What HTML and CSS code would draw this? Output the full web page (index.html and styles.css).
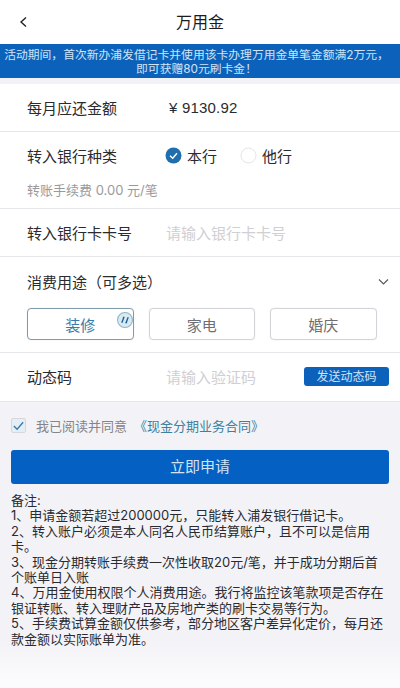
FILE: index.html
```html
<!DOCTYPE html>
<html lang="zh-CN">
<head>
    <meta charset="UTF-8">
    <meta name="viewport" content="width=device-width, initial-scale=1.0">
    <title>万用金</title>
    <link rel="stylesheet" href="styles.css">
</head>
<body>
    <header class="nav">
        <svg class="nav-back" width="10" height="14" viewBox="0 0 10 14"><path d="M8 2.5 L3 7 L8 11.5" fill="none" stroke="#222" stroke-width="1.4"/></svg>
        <h1>万用金</h1>
    </header>
    <div class="banner">活动期间，首次新办浦发借记卡并使用该卡办理万用金单笔金额满2万元，<br>即可获赠80元刷卡金！</div>

    <section class="row row-first">
        <span class="label">每月应还金额</span>
        <span class="amount">¥ 9130.92</span>
    </section>

    <section class="row-block row-bank">
        <div class="line">
            <span class="label">转入银行种类</span>
            <div class="radios">
                <span class="radio">
                    <svg width="17" height="17" viewBox="0 0 17 17"><circle cx="8.5" cy="8.5" r="8" fill="#1f6fae"/><path d="M5 8.8 L7.7 11.2 L12 6.2" fill="none" stroke="#fff" stroke-width="1.4"/></svg>
                    本行
                </span>
                <span class="radio">
                    <svg width="17" height="17" viewBox="0 0 17 17"><circle cx="8.5" cy="8.5" r="7.5" fill="#fff" stroke="#e4e4e6"/></svg>
                    他行
                </span>
            </div>
        </div>
        <p class="fee">转账手续费 0.00 元/笔</p>
    </section>

    <section class="row">
        <span class="label">转入银行卡卡号</span>
        <span class="placeholder">请输入银行卡卡号</span>
    </section>

    <section class="row-block row-purpose">
        <div class="line line-between">
            <span class="label">消费用途（可多选）</span>
            <svg width="11" height="8" viewBox="0 0 11 8"><path d="M1 1.5 L5.5 6 L10 1.5" fill="none" stroke="#556" stroke-width="1.1"/></svg>
        </div>
        <div class="tags">
            <div class="tag tag-on">装修
                <svg class="tag-mark" width="16" height="16" viewBox="0 0 15 15"><circle cx="7.5" cy="7.5" r="7" fill="#d8eaf2" stroke="#8fb4c6"/><path d="M4.5 10 L6.5 5 M5.5 5 H7 M8.5 10 L10.5 5 M7.8 10 H9.5" fill="none" stroke="#1f6296" stroke-width="1.3"/></svg>
            </div>
            <div class="tag">家电</div>
            <div class="tag">婚庆</div>
        </div>
    </section>

    <section class="row row-code">
        <span class="label">动态码</span>
        <span class="placeholder placeholder-code">请输入验证码</span>
        <span class="send">发送动态码</span>
    </section>

    <div class="agree">
        <span class="check">
            <svg width="14" height="12" viewBox="0 0 14 12"><path d="M2 6 L5.5 9.5 L12 2" fill="none" stroke="#2e7cb0" stroke-width="1.4"/></svg>
        </span>
        <span class="agree-text">我已阅读并同意</span>
        <span class="agree-link">《现金分期业务合同》</span>
    </div>

    <div class="submit">立即申请</div>

    <div class="notes">
        备注:<br>
        1、申请金额若超过200000元，只能转入浦发银行借记卡。<br>
        2、转入账户必须是本人同名人民币结算账户，且不可以是信用卡。<br>
        3、现金分期转账手续费一次性收取20元/笔，并于成功分期后首个账单日入账<br>
        4、万用金使用权限个人消费用途。我行将监控该笔款项是否存在银证转账、转入理财产品及房地产类的刷卡交易等行为。<br>
        5、手续费试算金额仅供参考，部分地区客户差异化定价，每月还款金额以实际账单为准。
    </div>
</body>
</html>
```

FILE: styles.css
```css
* {
    box-sizing: border-box;
}
body {
    margin: 0;
    height: 688px;
    overflow: hidden;
    background: linear-gradient(#f3f3f7 640px, #fbfbfd 680px);
    color: #2b2b2f;
    font-family: Inter, "Noto Sans CJK SC", sans-serif;
    font-size: 15px;
}
.nav {
    height: 44px;
    padding-bottom: 2px;
    background-color: #ffffff;
    display: flex;
    align-items: center;
    justify-content: center;
    position: relative;
}
.nav h1 {
    margin: 0;
    font-size: 16px;
    font-weight: 400;
    color: #1c1c1e;
}
.nav-back {
    position: absolute;
    left: 18px;
    top: 15px;
}
.banner {
    height: 34px;
    background-color: #0c62bb;
    color: #cfe4f7;
    font-size: 11.8px;
    line-height: 14px;
    padding: 4px 7px 0 0;
    text-align: center;
    white-space: nowrap;
}
.row {
    height: 48px;
    background-color: #ffffff;
    border-bottom: 1px solid #e6e6ea;
    padding: 0 11px 0 27px;
    display: flex;
    align-items: center;
}
.row-first {
    margin-top: 6px;
}
.row-block {
    background-color: #ffffff;
    border-bottom: 1px solid #e6e6ea;
    padding: 0 11px 0 27px;
}
.label {
    width: 139px;
    flex-shrink: 0;
    white-space: nowrap;
}
.amount {
    margin-left: 3px;
    font-family: "Liberation Sans", sans-serif;
    font-size: 15px;
    letter-spacing: 0.2px;
}
.line {
    display: flex;
    align-items: center;
}
.line-between {
    justify-content: space-between;
}
.row-bank {
    height: 77px;
    padding-top: 13px;
}
.radios {
    display: flex;
    gap: 23px;
    margin-left: -1px;
}
.radio {
    display: flex;
    align-items: center;
    gap: 5px;
}
.fee {
    margin: 14px 0 0;
    font-size: 13px;
    color: #9a9a9e;
}
.placeholder {
    color: #cfcfd4;
}
.placeholder-code {
    flex: 1;
}
.row-purpose {
    height: 96px;
    padding-top: 14px;
}
.tags {
    display: flex;
    gap: 15px;
    margin-top: 16px;
}
.tag {
    width: 106.5px;
    height: 32px;
    border: 1px solid #d3d3d8;
    border-radius: 4px;
    box-shadow: 0 0 1px #d3d3d8;
    color: #6f6f73;
    display: flex;
    align-items: center;
    justify-content: center;
    position: relative;
}
.tag-on {
    border-color: #7f9cab;
    color: #3d7ba6;
}
.tag-mark {
    position: absolute;
    top: 3px;
    right: 0;
}
.row-code {
    height: 49px;
    padding-bottom: 1px;
}
.send {
    width: 85px;
    height: 19px;
    border-radius: 3px;
    background-color: #0c62bb;
    color: #cfe4f7;
    font-size: 12px;
    line-height: 19px;
    text-align: center;
}
.agree {
    display: flex;
    align-items: center;
    height: 48px;
    padding: 0 11px 1px;
    font-size: 13px;
}
.check {
    width: 15px;
    height: 15px;
    margin-right: 10px;
    border: 1px solid #d5d9de;
    border-radius: 2px;
    background-color: #e6edf3;
    display: flex;
    align-items: center;
    justify-content: center;
}
.agree-text {
    color: #84848a;
    margin-right: 7px;
}
.agree-link {
    color: #3f7f9f;
}
.submit {
    height: 34px;
    margin: 0 11px;
    border-radius: 3px;
    background-color: #0560c4;
    color: #cfe4f7;
    text-align: center;
    line-height: 34px;
}
.notes {
    margin-top: 9px;
    padding: 0 14px 0 11px;
    font-size: 13px;
    line-height: 15.4px;
    color: #2b2b2f;
}
```
